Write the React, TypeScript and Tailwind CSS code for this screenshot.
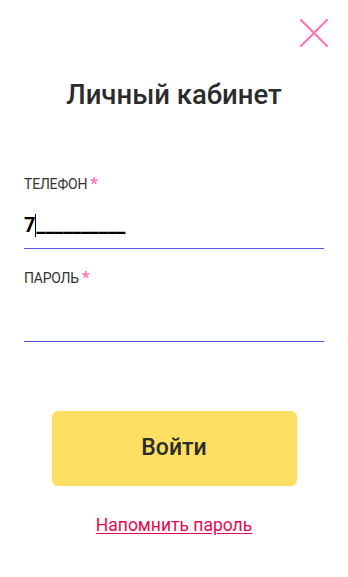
import React from 'react';

const Field = ({ label, tall, children }: { label: string; tall?: boolean; children?: React.ReactNode }) => (
  <div>
    <div className="flex h-4 items-baseline gap-[3px] text-[14px] leading-4 text-[#333]">
      <span className="tracking-[-0.2px]">{label}</span>
      <span className="text-[17px] font-bold text-[#ff6fb4]">*</span>
    </div>
    <div className={`${tall ? 'h-[58px]' : 'h-[57px]'} border-b border-[#5353dc] flex items-end pb-[11px]`}>
      {children}
    </div>
  </div>
);

const App = () => {
  return (
    <div className="min-h-screen w-full bg-white font-['Roboto',sans-serif] text-[#2b2b2b]">
      {/* Close */}
      <div className="flex justify-end pt-[19px] pr-[20px]">
        <button className="w-[28px] h-[28px]" aria-label="Закрыть">
          <svg width="28" height="28" viewBox="0 0 28 28" fill="none">
            <path d="M1 1L27 27M27 1L1 27" stroke="#ff74b8" strokeWidth="2.2" strokeLinecap="round" />
          </svg>
        </button>
      </div>

      <h1 className="mt-[32px] h-8 text-center text-[27.5px] leading-8 font-medium">Личный кабинет</h1>

      <form className="px-6 mt-[64px]">
        <Field label="ТЕЛЕФОН" tall>
          <div className="flex items-center text-[20px] leading-6 font-bold text-black">
            <span>7</span>
            <span className="inline-block w-px h-[23px] bg-black"></span>
            <span>__________</span>
          </div>
        </Field>
        <div className="mt-[20px]">
          <Field label="ПАРОЛЬ" />
        </div>

        <div className="flex justify-center mt-[69px]">
          <button
            type="button"
            className="w-[245px] h-[75px] rounded-md bg-[#ffdf61] text-[23px] font-medium text-[#2b2b2b]"
          >
            Войти
          </button>
        </div>

        <div className="text-center mt-[28px]">
          <a href="#" className="text-[17.5px] leading-5 text-[#e8084e] underline underline-offset-2">
            Напомнить пароль
          </a>
        </div>
      </form>
    </div>
  );
};

export default App;
